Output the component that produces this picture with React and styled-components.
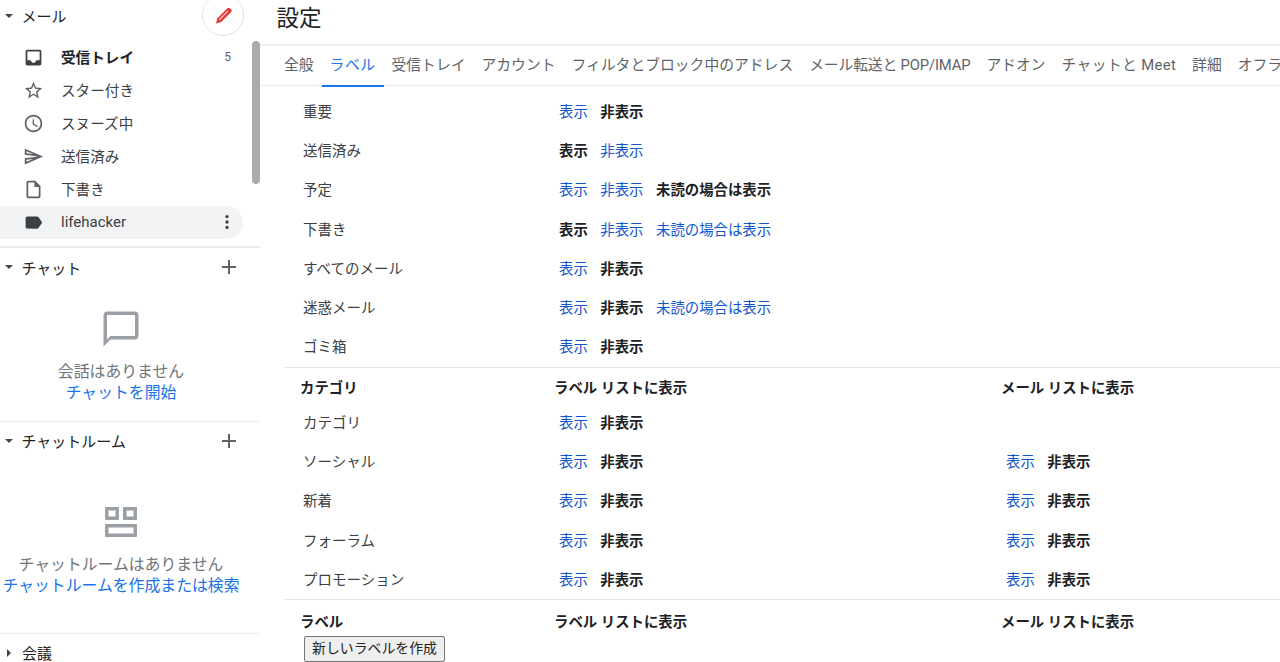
import React from 'react'
import styled, { createGlobalStyle } from 'styled-components'

const GlobalStyle = createGlobalStyle`
  html, body {
    margin: 0;
    height: 662px;
    overflow: hidden;
    background: #fff;
    font-family: Roboto, "Noto Sans CJK JP", sans-serif;
    color: #202124;
  }
`

const Page = styled.div`
  display: flex;
  width: 1280px;
  height: 662px;
  overflow: hidden;
`

const Sidebar = styled.aside`
  position: relative;
  flex: 0 0 260px;
  width: 260px;
  height: 662px;
  overflow: hidden;
`

const Scrollbar = styled.div`
  position: absolute;
  left: 252px;
  top: 41px;
  width: 8px;
  height: 143px;
  border-radius: 4px;
  background: #ababab;
`

const SectionHeader = styled.div`
  display: flex;
  align-items: center;
  height: ${(p) => p.$height || 38}px;
  padding-left: 5px;
  font-size: 15px;
  color: #202124;
`

const Caret = styled.span`
  flex: 0 0 auto;
  width: 0;
  height: 0;
  border-style: solid;
  border-color: transparent;
  margin-right: ${(p) => (p.$closed ? 11 : 8.5)}px;
  ${(p) =>
    p.$closed
      ? `border-width: 4px 0 4px 4px; border-left-color: #444746; margin-left: 2px;`
      : `border-width: 4px 4px 0 4px; border-top-color: #444746;`}
`

const HeaderLabel = styled.span`
  flex: 1;
`

const ComposeButton = styled.div`
  display: flex;
  flex: 0 0 auto;
  align-items: center;
  justify-content: center;
  box-sizing: border-box;
  width: 42px;
  height: 42px;
  margin: -1px 16px 0 0;
  border: 1px solid #e3e3e3;
  border-radius: 50%;
  background: #fff;
`

const PlusIcon = styled.svg`
  width: 24px;
  height: 24px;
  margin-right: 19px;
  fill: #5f6368;
`

const MailList = styled.div`
  margin: 9.5px 0 7.5px;
`

const MailRow = styled.div`
  display: flex;
  align-items: center;
  box-sizing: border-box;
  width: 243px;
  height: 33px;
  padding: 0 12px 0 21px;
  border-radius: 0 17px 17px 0;
  font-size: 14.6px;
  color: #3c4043;
  font-weight: ${(p) => (p.$bold ? 700 : 400)};
  background: ${(p) => (p.$active ? '#f1f3f4' : 'transparent')};
  ${(p) => p.$bold && 'color: #202124;'}
`

const RowIcon = styled.svg`
  flex: 0 0 21px;
  width: 21px;
  height: 21px;
  margin: 0 17.5px 0 1.5px;
  fill: ${(p) => (p.$strong ? '#3c4043' : '#5f6368')};
`

const RowLabel = styled.span`
  flex: 1;
  padding-bottom: ${(p) => (p.$latin ? 0 : 2)}px;
  font-size: ${(p) => (p.$latin ? 15 : 14.6)}px;
`

const RowCount = styled.span`
  font-size: 12px;
  font-weight: 400;
  color: #5f6368;
`

const MoreIcon = styled.svg`
  width: 20px;
  height: 20px;
  margin-right: -6px;
  fill: #3c4043;
`

const Divider = styled.div`
  height: ${(p) => p.$thick || 1}px;
  background: #ececec;
`

const EmptyBlock = styled.div`
  display: flex;
  flex-direction: column;
  align-items: center;
  width: 242px;
  padding-top: ${(p) => p.$top}px;
  padding-bottom: ${(p) => p.$bottom}px;
  font-size: 15.85px;
  line-height: 21px;
  white-space: nowrap;
`

const EmptyIcon = styled.svg`
  display: block;
  width: ${(p) => p.$size}px;
  height: ${(p) => p.$size}px;
  margin-bottom: ${(p) => p.$gap}px;
  fill: #9aa0a6;
`

const EmptyText = styled.div`
  color: #70757a;
`

const EmptyLink = styled.a`
  color: #1a73e8;
`

const Main = styled.main`
  flex: 1;
  min-width: 0;
  overflow: hidden;
`

const Title = styled.h1`
  box-sizing: border-box;
  height: 44px;
  margin: 0;
  padding: 3px 0 0 16.5px;
  font-size: 22.5px;
  line-height: 30px;
  font-weight: 400;
  color: #202124;
`

const TabBar = styled.nav`
  display: flex;
  box-sizing: border-box;
  height: 42px;
  padding-left: 16px;
  border-top: 2px solid #efefef;
  border-bottom: 1px solid #ececec;
  white-space: nowrap;
`

const Tab = styled.div`
  box-sizing: border-box;
  height: 41px;
  padding: 0 8px;
  font-size: 14.8px;
  line-height: 38px;
  letter-spacing: ${(p) => p.$spacing || 0}px;
  color: ${(p) => (p.$active ? '#1a73e8' : '#5f6368')};
  border-bottom: 2px solid ${(p) => (p.$active ? '#1a73e8' : 'transparent')};
`

const Settings = styled.div`
  margin-left: 24px;
  padding-top: 5.5px;
`

const Grid = styled.div`
  display: grid;
  grid-template-columns: 271px 447px 1fr;
  align-items: center;
  box-sizing: border-box;
  height: 39.3px;
  padding-bottom: 2px;
  font-size: 14.4px;
`

const HeadGrid = styled(Grid)`
  height: ${(p) => p.$height}px;
  padding-top: ${(p) => p.$pad}px;
  padding-bottom: 0;
  font-weight: 700;
  color: #202124;
`

const RowName = styled.div`
  padding-left: 19px;
  font-size: 14.5px;
  color: #3c4043;
`

const HeadCell = styled.div`
  margin-left: ${(p) => (p.$first ? 16 : -1)}px;
`

const Options = styled.div`
  display: flex;
  gap: 12.5px;
  padding-left: 4px;
`

const Option = styled.span`
  color: ${(p) => (p.$on ? '#202124' : '#1155cc')};
  font-weight: ${(p) => (p.$on ? 700 : 400)};
`

const SectionRule = styled.div`
  height: 1px;
  background: #e6e6e6;
`

const CreateButton = styled.button`
  display: block;
  box-sizing: border-box;
  width: 141px;
  height: 26px;
  margin: 0 0 0 20px;
  padding: 0 0 2px;
  border: 1px solid #767676;
  border-radius: 2px;
  background: #efefef;
  font-family: inherit;
  font-size: 13.9px;
  line-height: 22px;
  color: #202124;
`

const icons = {
  inbox:
    'M19 3H5c-1.1 0-2 .9-2 2v14c0 1.1.9 2 2 2h14c1.1 0 2-.9 2-2V5c0-1.1-.9-2-2-2zm0 12h-4c0 1.66-1.35 3-3 3s-3-1.34-3-3H4.99V5H19v10z',
  star:
    'M22 9.24l-7.19-.62L12 2 9.19 8.63 2 9.24l5.46 4.73L5.82 21 12 17.27 18.18 21l-1.63-7.03L22 9.24zM12 15.4l-3.76 2.27 1-4.28-3.32-2.88 4.38-.38L12 6.1l1.71 4.04 4.38.38-3.32 2.88 1 4.28L12 15.4z',
  clock:
    'M11.99 2C6.47 2 2 6.48 2 12s4.47 10 9.99 10C17.52 22 22 17.52 22 12S17.52 2 11.99 2zM12 20c-4.42 0-8-3.58-8-8s3.58-8 8-8 8 3.58 8 8-3.58 8-8 8zm.5-13H11v6l5.25 3.15.75-1.23-4.5-2.67z',
  send:
    'M4.01 6.03l7.51 3.22-7.52-1 .01-2.22m7.5 8.72L4 17.97v-2.22l7.51-1M2.01 3L2 10l15 2-15 2 .01 7L23 12 2.01 3z',
  draft:
    'M14 2H6c-1.1 0-1.99.9-1.99 2L4 20c0 1.1.89 2 1.99 2H18c1.1 0 2-.9 2-2V8l-6-6zM6 20V4h7v5h5v11H6z',
  label:
    'M17.63 5.84C17.27 5.33 16.67 5 16 5L5 5.01C3.9 5.01 3 5.9 3 7v10c0 1.1.9 1.99 2 1.99L16 19c.67 0 1.27-.33 1.63-.84L22 12l-4.37-6.16z',
}

const mailRows = [
  { icon: 'inbox', label: '受信トレイ', bold: true, count: '5' },
  { icon: 'star', label: 'スター付き' },
  { icon: 'clock', label: 'スヌーズ中' },
  { icon: 'send', label: '送信済み' },
  { icon: 'draft', label: '下書き' },
  { icon: 'label', label: 'lifehacker', active: true },
]

// spacing nudges the tab widths, the original tab font is not installed here
const tabs = [
  { label: '全般' },
  { label: 'ラベル', spacing: 0.5, active: true },
  { label: '受信トレイ' },
  { label: 'アカウント' },
  { label: 'フィルタとブロック中のアドレス' },
  { label: 'メール転送と POP/IMAP', spacing: -0.15 },
  { label: 'アドオン' },
  { label: 'チャットと Meet', spacing: 0.35 },
  { label: '詳細' },
  { label: 'オフライン' },
]

// on is the index of the selected option, it is shown in bold
const systemRows = [
  { name: '重要', options: ['表示', '非表示'], on: 1 },
  { name: '送信済み', options: ['表示', '非表示'], on: 0 },
  { name: '予定', options: ['表示', '非表示', '未読の場合は表示'], on: 2 },
  { name: '下書き', options: ['表示', '非表示', '未読の場合は表示'], on: 0 },
  { name: 'すべてのメール', options: ['表示', '非表示'], on: 1 },
  { name: '迷惑メール', options: ['表示', '非表示', '未読の場合は表示'], on: 1 },
  { name: 'ゴミ箱', options: ['表示', '非表示'], on: 1 },
]

const categoryRows = [
  { name: 'カテゴリ', both: false },
  { name: 'ソーシャル', both: true },
  { name: '新着', both: true },
  { name: 'フォーラム', both: true },
  { name: 'プロモーション', both: true },
]

const OptionGroup = ({ options, on }) => (
  <Options>
    {options.map((text, i) => (
      <Option key={text} $on={i === on}>
        {text}
      </Option>
    ))}
  </Options>
)

const Plus = () => (
  <PlusIcon viewBox="0 0 24 24">
    <path d="M19 13h-6v6h-2v-6H5v-2h6V5h2v6h6v2z" />
  </PlusIcon>
)

const Pencil = () => (
  <svg width="24" height="24" viewBox="0 0 24 24">
    <path
      fill="#e53935"
      d="M5 20.5l1.4-5.2 10-10a1.8 1.8 0 0 1 2.5 0l1.3 1.3a1.8 1.8 0 0 1 0 2.5l-10 10z"
    />
    <path stroke="#fbdcdb" strokeWidth="1.2" d="M8.2 16.8l8.6-8.6" />
  </svg>
)

const Sidenav = () => (
  <Sidebar>
    <SectionHeader $height={31}>
      <Caret />
      <HeaderLabel>メール</HeaderLabel>
      <ComposeButton>
        <Pencil />
      </ComposeButton>
    </SectionHeader>
    <MailList>
      {mailRows.map((row) => (
        <MailRow key={row.label} $bold={row.bold} $active={row.active}>
          <RowIcon viewBox="0 0 24 24" $strong={row.bold || row.active}>
            <path d={icons[row.icon]} />
          </RowIcon>
          <RowLabel $latin={row.active}>{row.label}</RowLabel>
          {row.count && <RowCount>{row.count}</RowCount>}
          {row.active && (
            <MoreIcon viewBox="0 0 24 24">
              <circle cx="12" cy="5.5" r="2" />
              <circle cx="12" cy="12" r="2" />
              <circle cx="12" cy="18.5" r="2" />
            </MoreIcon>
          )}
        </MailRow>
      ))}
    </MailList>
    <Divider $thick={2} />
    <SectionHeader>
      <Caret />
      <HeaderLabel>チャット</HeaderLabel>
      <Plus />
    </SectionHeader>
    <EmptyBlock $top={22} $bottom={17.5}>
      <EmptyIcon viewBox="0 0 24 24" $size={42} $gap={11}>
        <path d="M20 2H4c-1.1 0-2 .9-2 2v18l4-4h14c1.1 0 2-.9 2-2V4c0-1.1-.9-2-2-2zm0 14H6l-2 2V4h16v12z" />
      </EmptyIcon>
      <EmptyText>会話はありません</EmptyText>
      <EmptyLink>チャットを開始</EmptyLink>
    </EmptyBlock>
    <Divider />
    <SectionHeader>
      <Caret />
      <HeaderLabel>チャットルーム</HeaderLabel>
      <Plus />
    </SectionHeader>
    <EmptyBlock $top={46} $bottom={36.5}>
      <EmptyIcon viewBox="0 0 32 32" $size={32} $gap={16.5}>
        <path
          fillRule="evenodd"
          d="M1 1h12a1 1 0 0 1 1 1v11a1 1 0 0 1-1 1H1a1 1 0 0 1-1-1V2a1 1 0 0 1 1-1zm2.500 3.500v6h7v-6h-7zM19 1h12a1 1 0 0 1 1 1v11a1 1 0 0 1-1 1H19a1 1 0 0 1-1-1V2a1 1 0 0 1 1-1zm2.500 3.500v6h7v-6h-7zM1 18h30a1 1 0 0 1 1 1v11a1 1 0 0 1-1 1H1a1 1 0 0 1-1-1V19a1 1 0 0 1 1-1zm2.500 3.500v6h25v-6h-25z"
        />
      </EmptyIcon>
      <EmptyText>チャットルームはありません</EmptyText>
      <EmptyLink>チャットルームを作成または検索</EmptyLink>
    </EmptyBlock>
    <Divider />
    <SectionHeader>
      <Caret $closed />
      <HeaderLabel>会議</HeaderLabel>
    </SectionHeader>
    <Scrollbar />
  </Sidebar>
)

const ListHead = ({ title, height, pad }) => (
  <HeadGrid $height={height} $pad={pad}>
    <HeadCell $first>{title}</HeadCell>
    <HeadCell>ラベル リストに表示</HeadCell>
    <HeadCell>メール リストに表示</HeadCell>
  </HeadGrid>
)

const App = () => (
  <Page>
    <GlobalStyle />
    <Sidenav />
    <Main>
      <Title>設定</Title>
      <TabBar>
        {tabs.map((tab) => (
          <Tab key={tab.label} $active={tab.active} $spacing={tab.spacing}>
            {tab.label}
          </Tab>
        ))}
      </TabBar>
      <Settings>
        {systemRows.map((row) => (
          <Grid key={row.name}>
            <RowName>{row.name}</RowName>
            <OptionGroup options={row.options} on={row.on} />
          </Grid>
        ))}
        <SectionRule />
        <ListHead title="カテゴリ" height={35} pad={3} />
        {categoryRows.map((row) => (
          <Grid key={row.name}>
            <RowName>{row.name}</RowName>
            <OptionGroup options={['表示', '非表示']} on={1} />
            {row.both && <OptionGroup options={['表示', '非表示']} on={1} />}
          </Grid>
        ))}
        <SectionRule />
        <ListHead title="ラベル" height={36} pad={4} />
        <CreateButton>新しいラベルを作成</CreateButton>
      </Settings>
    </Main>
  </Page>
)

export default App
